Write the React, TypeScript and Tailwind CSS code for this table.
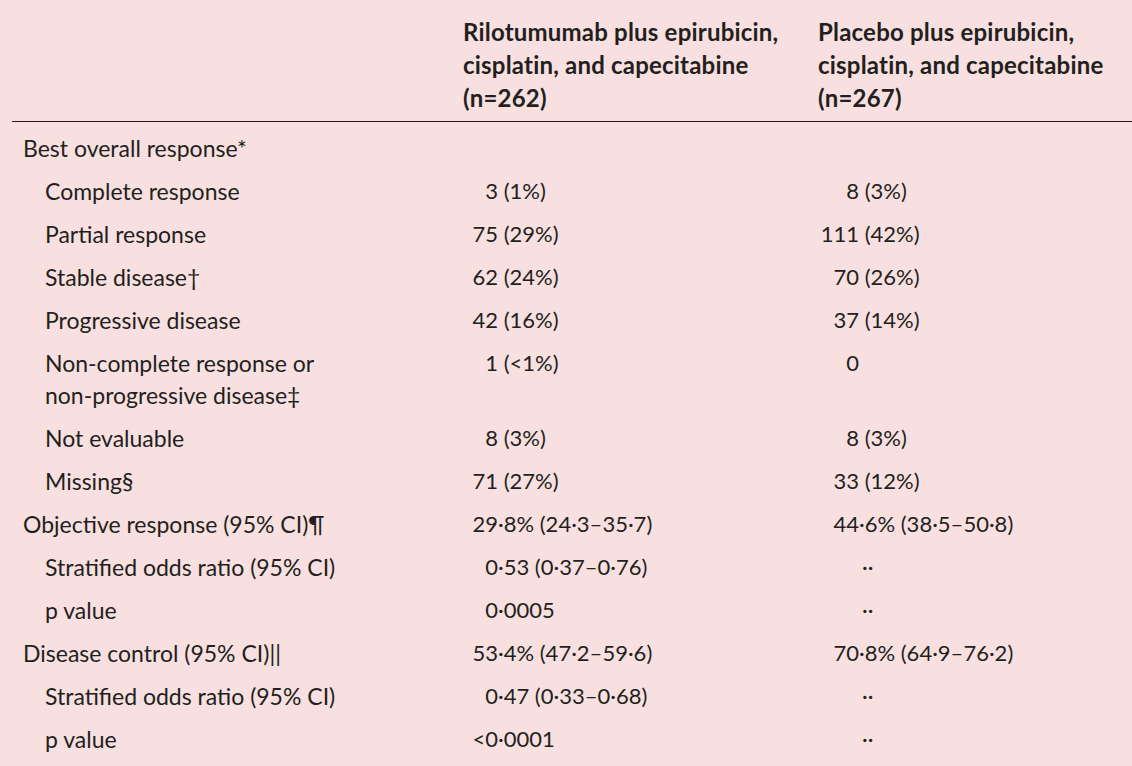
import React from "react";

type Row = {
  label: string;
  indent?: boolean;
  label2?: string;
  a: [string, string];
  b: [string, string];
};

const rows: Row[] = [
  { label: "Best overall response*", a: ["", ""], b: ["", ""] },
  { label: "Complete response", indent: true, a: ["3", " (1%)"], b: ["8", " (3%)"] },
  { label: "Partial response", indent: true, a: ["75", " (29%)"], b: ["111", " (42%)"] },
  { label: "Stable disease†", indent: true, a: ["62", " (24%)"], b: ["70", " (26%)"] },
  { label: "Progressive disease", indent: true, a: ["42", " (16%)"], b: ["37", " (14%)"] },
  {
    label: "Non-complete response or",
    label2: "non-progressive disease‡",
    indent: true,
    a: ["1", " (<1%)"],
    b: ["0", ""],
  },
  { label: "Not evaluable", indent: true, a: ["8", " (3%)"], b: ["8", " (3%)"] },
  { label: "Missing§", indent: true, a: ["71", " (27%)"], b: ["33", " (12%)"] },
  { label: "Objective response (95% CI)¶", a: ["29", "·8% (24·3–35·7)"], b: ["44", "·6% (38·5–50·8)"] },
  { label: "Stratified odds ratio (95% CI)", indent: true, a: ["0", "·53 (0·37–0·76)"], b: ["", "··"] },
  { label: "p value", indent: true, a: ["0", "·0005"], b: ["", "··"] },
  { label: "Disease control (95% CI)||", a: ["53", "·4% (47·2–59·6)"], b: ["70", "·8% (64·9–76·2)"] },
  { label: "Stratified odds ratio (95% CI)", indent: true, a: ["0", "·47 (0·33–0·68)"], b: ["", "··"] },
  { label: "p value", indent: true, a: ["<0", "·0001"], b: ["", "··"] },
];

function Val({ v, box }: { v: [string, string]; box: string }) {
  if (!v[0] && !v[1]) return null;
  return (
    <span className="flex whitespace-pre">
      <span className={`${box} shrink-0 text-right`}>{v[0]}</span>
      <span className={v[0] ? "" : "pl-[3px]"}>{v[1]}</span>
    </span>
  );
}

export default function App() {
  return (
    <div
      className="w-[1132px] h-[766px] overflow-hidden bg-[#f7e0df] text-[#231f20] text-[22px]"
      style={{ fontFamily: "Lato, 'Noto Sans', sans-serif" }}
    >
      <div className="flex pt-[15px] pb-[7px] font-bold leading-[33px] text-[24px] tracking-[0.2px]">
        <div className="w-[463px] shrink-0" />
        <div className="w-[355px] shrink-0">
          <div>Rilotumumab plus epirubicin,</div>
          <div>cisplatin, and capecitabine</div>
          <div>(n=262)</div>
        </div>
        <div>
          <div>Placebo plus epirubicin,</div>
          <div>cisplatin, and capecitabine</div>
          <div>(n=267)</div>
        </div>
      </div>
      <div className="ml-[12px] h-px bg-[#2a1a1c]" />
      <div className="pt-[4px]">
        {rows.map((r, i) => (
          <div key={i} className="flex py-[5.5px] leading-[32px]">
            <div
              className={`w-[463px] shrink-0 text-[23px] ${r.indent ? "pl-[45px]" : "pl-[23px]"}`}
            >
              <div>{r.label}</div>
              {r.label2 && <div>{r.label2}</div>}
            </div>
            <div className="w-[355px] shrink-0">
              <Val v={r.a} box="w-[35px]" />
            </div>
            <div>
              <Val v={r.b} box="w-[41px]" />
            </div>
          </div>
        ))}
      </div>
    </div>
  );
}
